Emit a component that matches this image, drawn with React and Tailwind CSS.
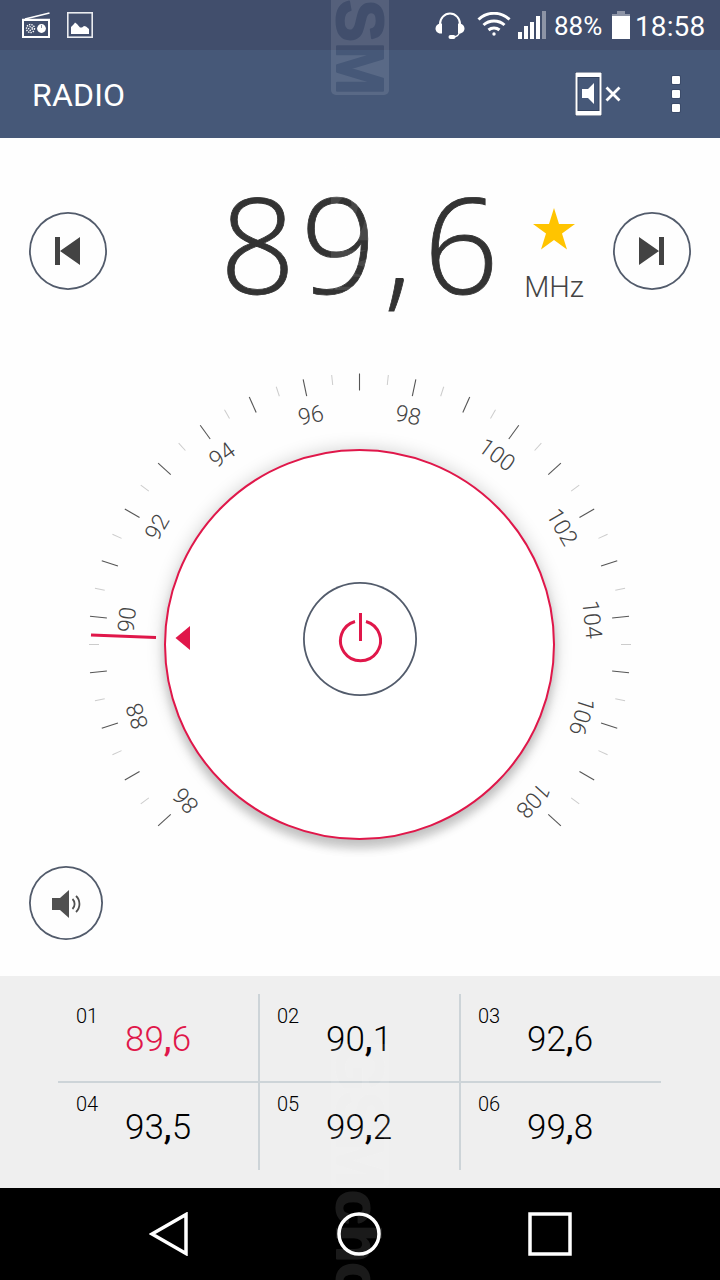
const presets = [
  { id: "01", freq: "89,6", active: true },
  { id: "02", freq: "90,1" },
  { id: "03", freq: "92,6" },
  { id: "04", freq: "93,5" },
  { id: "05", freq: "99,2" },
  { id: "06", freq: "99,8" },
];

// 86 - 108 MHz, 12 degrees per MHz, 97 MHz on top
const majorTicks = Array.from({ length: 23 }, (_, i) => -132 + i * 12);
const minorTicks = Array.from({ length: 22 }, (_, i) => -126 + i * 12);
const labels = [86, 88, 90, 92, 94, 96, 98, 100, 102, 104, 106, 108];

function StatusBar() {
  return (
    <div className="flex h-[50px] items-center bg-[#414e6c] pl-[22px] pr-[14px] text-white">
      <svg className="mt-[2px]" width="28" height="28" viewBox="0 0 28 28" fill="none">
        <path d="M3 7L27.500 1" stroke="#fff" strokeWidth="1.600" />
        <rect x="1" y="8" width="26" height="17" stroke="#fff" strokeWidth="2" />
        <path d="M0 7.500h28" stroke="#fff" strokeWidth="1.500" />
        <circle cx="8.500" cy="16.500" r="4" stroke="#fff" strokeWidth="1.400" strokeDasharray="1.4 1" />
        <circle cx="8.500" cy="16.500" r="1.800" stroke="#fff" strokeWidth="1.400" strokeDasharray="1.2 1" />
        <circle cx="19.500" cy="16.500" r="4.400" fill="#fff" />
        <path d="M19.500 13v3" stroke="#8f97aa" strokeWidth="1" />
      </svg>
      <svg className="ml-[17px]" width="26" height="26" viewBox="0 0 26 26" fill="none">
        <rect x=".8" y=".8" width="24.400" height="24.400" stroke="#e9ebef" strokeWidth="1.600" />
        <path d="M4 22v-7l3-3 1-1.500 2 1.500 3 3.500h2l2-1.500 2 .5 3 2.500v5z" fill="#fff" />
      </svg>
      <svg className="ml-auto mt-[2px]" width="30" height="28" viewBox="0 0 30 28" fill="none">
        <path d="M5 14V12a10 10.500 0 0 1 20 0v2" stroke="#fff" strokeWidth="2" />
        <path d="M7 11.500v10H5.500C2.500 21.500.5 19 .5 16.500s2-4.500 4-5zM23 11.500v10h1.500c3 0 5-2.500 5-5s-2-4.500-4-5z" fill="#fff" />
        <path d="M24.500 20c-.5 3-3 5-7 5" stroke="#fff" strokeWidth="1.500" />
        <rect x="13.500" y="23" width="7" height="4" rx="2" fill="#fff" />
      </svg>
      <svg className="ml-[12px] mt-[-2px]" width="34" height="24" viewBox="0 0 34 24" fill="none" stroke="#fff">
        <path d="M1.500 7.500a22.500 22.500 0 0 1 31 0" strokeWidth="3" />
        <path d="M6.500 13a15.500 15.500 0 0 1 21 0" strokeWidth="3" />
        <path d="M11.500 18a8.500 8.500 0 0 1 11 0" strokeWidth="3" />
        <circle cx="17" cy="22" r="1.700" fill="#fff" stroke="none" />
      </svg>
      <svg className="ml-[7px]" width="28" height="28" viewBox="0 0 28 28" fill="#fff">
        <rect x="0" y="21" width="4" height="7" />
        <rect x="6" y="15" width="4" height="13" />
        <rect x="12" y="11" width="4" height="17" />
        <rect x="18" y="5" width="4" height="23" />
        <rect x="24" y="0" width="4" height="28" opacity=".4" />
      </svg>
      <span className="ml-[8px] mt-[2px] w-[50px] text-[26px] leading-[50px]">88%</span>
      <svg className="ml-[8px]" width="18" height="28" viewBox="0 0 18 28">
        <path d="M5 0h8v3h5v2H0V3h5z" fill="#8d94a6" />
        <rect y="5" width="18" height="23" fill="#fff" />
      </svg>
      <span className="ml-[5px] mt-[3px] w-[71px] text-[28px] leading-[50px] tracking-[0.1px]">18:58</span>
    </div>
  );
}

function AppBar() {
  return (
    <div className="flex h-[88px] items-center bg-[#465878] pl-[32px] pr-[40px] text-white">
      <h1 className="mt-px text-[32px] tracking-[0.2px]">RADIO</h1>
      <svg className="ml-auto" width="48" height="44" viewBox="0 0 48 44">
        <rect x="0" y="0" width="27" height="44" fill="#34435f" />
        <rect x=".5" y=".5" width="26" height="43" rx="1" fill="#fff" />
        <rect x="2.500" y="5" width="22" height="34" fill="#34435f" />
        <rect x="3.500" y="6" width="20" height="32" fill="#465878" />
        <path d="M7 17h6l6-6v21l-6-6H7z" fill="#fff" />
        <path d="M31.500 15.500l13 13M44.500 15.500l-13 13" stroke="#fff" strokeWidth="2.800" />
      </svg>
      <div className="ml-[49px] flex flex-col gap-[6px]">
        <span className="h-2 w-2 rounded-[1px] bg-white ring-1 ring-[#34435f]/60" />
        <span className="h-2 w-2 rounded-[1px] bg-white ring-1 ring-[#34435f]/60" />
        <span className="h-2 w-2 rounded-[1px] bg-white ring-1 ring-[#34435f]/60" />
      </div>
    </div>
  );
}

function RoundButton({ className, children }) {
  return (
    <button className={`flex shrink-0 items-center justify-center rounded-full shadow-[inset_0_0_0_1.8px_#525b6b] ${className}`}>
      {children}
    </button>
  );
}

function Frequency() {
  return (
    <div className="flex h-[226px] items-center px-[29px]">
      <RoundButton className="h-[78px] w-[78px]">
        <svg width="26" height="28" viewBox="0 0 26 28" fill="#434343">
          <path d="M0 0h5v28H0zM5 14L25 0v28z" />
        </svg>
      </RoundButton>
      <div className="ml-[113px] h-[226px] w-[289px] whitespace-nowrap font-['Open_Sans'] text-[132px] font-light leading-[210px] tracking-[5.500px] text-[#333] [-webkit-text-stroke:0.8px_#333]">
        89<span className="ml-[2px] mr-[6px]">,</span>6
      </div>
      <div className="ml-[13px] flex w-[64px] flex-col items-center pt-[14px]">
        <svg width="42" height="42" viewBox="0 0 42 42" fill="#ffc400">
          <path d="M21 0l5 16h16L29 25.500l5 16L21 32 8 41.500l5-16L0 16h16z" />
        </svg>
        <span className="mt-[16px] text-[29px] font-light leading-[42px] text-[#444]">MHz</span>
      </div>
      <RoundButton className="ml-auto h-[78px] w-[78px]">
        <svg width="26" height="28" viewBox="0 0 26 28" fill="#434343">
          <path d="M20 0h5v28h-5zM20 14L0 0v28z" />
        </svg>
      </RoundButton>
    </div>
  );
}

function Dial() {
  return (
    <div className="grid h-[496px] place-items-center">
      <svg className="col-start-1 row-start-1" width="720" height="496" viewBox="0 364 720 496">
        {majorTicks.map((a) => (
          <path key={a} d="M359.500 373.500v17" stroke="#555" strokeWidth="1.100" transform={`rotate(${a} 359.500 644.500)`} />
        ))}
        {minorTicks.map((a) => (
          <path key={a} d="M360 373.500v10" stroke="#ccc" strokeWidth="1" transform={`rotate(${a} 360 644.500)`} />
        ))}
        {labels.map((n) => (
          <text
            key={n}
            x="359.500"
            y="418"
            textAnchor="middle"
            fill="#444"
            className="text-[23px] font-light"
            transform={`rotate(${(n - 97) * 12} 359.500 644)`}
          >
            {n}
          </text>
        ))}
        <path d="M91 635l65 2.500" stroke="#e0174a" strokeWidth="3" />
      </svg>
      <div className="z-10 col-start-1 row-start-1 mr-px mt-[64px] flex h-[391px] w-[391px] items-center rounded-full border-2 border-[#e0174a] bg-white shadow-[0_0_18px_rgba(0,0,0,0.180),0_9px_8px_rgba(0,0,0,0.160)]">
        <svg className="ml-[9px] mt-[-13px]" width="15" height="24" viewBox="0 0 15 24" fill="#e0174a">
          <path d="M.5 12L15 0v24z" />
        </svg>
        <RoundButton className="ml-[113px] mt-[-11px] h-[114px] w-[114px]">
          <svg className="mb-[2px]" width="44" height="50" viewBox="0 0 44 50" fill="none" stroke="#e0174a" strokeWidth="3">
            <path d="M22.500 0v28" />
            <path d="M17 8.500a20 20 0 1 0 11 0" />
          </svg>
        </RoundButton>
      </div>
    </div>
  );
}

function Presets() {
  return (
    <div className="h-[212px] bg-[#efefef] pl-[58px] pr-[59px] pt-[18px]">
      <div className="grid grid-cols-[202px_201px_200px] grid-rows-[89px_87px]">
        {presets.map((p, i) => (
          <button
            key={p.id}
            className={`flex items-start border-[#cdd4d8] text-left ${i < 3 ? "border-b-2 pt-[10px]" : "pt-[9px]"} ${i % 3 < 2 ? "border-r-2" : ""} ${i % 3 > 0 ? "pl-[17px]" : "pl-[18px]"}`}
          >
            <span className="w-[49px] text-[20px] font-light leading-[24px] text-black">{p.id}</span>
            <span className={`mt-[15px] whitespace-nowrap text-[35px] font-light leading-[42px] ${p.active ? "text-[#e0174a]" : "text-black"}`}>
              {p.freq.split(",")[0]}
              <span className="font-medium">,</span>
              {p.freq.split(",")[1]}
            </span>
          </button>
        ))}
      </div>
    </div>
  );
}

function NavBar() {
  return (
    <div className="flex h-[92px] items-center bg-black pl-[149px]">
      <svg width="40" height="44" viewBox="0 0 40 44" fill="none" stroke="#fff" strokeWidth="3.500">
        <path d="M3 22L37 2.500v39z" />
      </svg>
      <svg className="ml-[148px]" width="44" height="44" viewBox="0 0 44 44" fill="none" stroke="#fff" strokeWidth="3.500">
        <circle cx="22" cy="22" r="20" />
      </svg>
      <svg className="ml-[147px]" width="44" height="44" viewBox="0 0 44 44" fill="none" stroke="#fff" strokeWidth="3.500">
        <rect x="2" y="2" width="40" height="40" />
      </svg>
    </div>
  );
}

function Watermark() {
  return (
    <svg className="pointer-events-none absolute left-0 top-0 z-20" width="720" height="1280" viewBox="0 0 720 1280" fontFamily="Liberation Sans" fontWeight="700">
      <mask id="gsm" maskUnits="userSpaceOnUse" x="331" y="-48" width="58" height="143">
        <rect x="331" y="-48" width="58" height="143" rx="5" fill="#fff" />
        <text transform="translate(337 -50) rotate(90)" fontSize="67" textLength="145" lengthAdjust="spacingAndGlyphs" fill="#000" stroke="#000" strokeWidth="2" strokeLinejoin="round">GSM</text>
      </mask>
      {[0, 195, 1092].map((y) => (
        <g key={y} transform={`translate(0 ${y})`}>
          <rect x="331" y="-48" width="58" height="143" fill="#fff" opacity=".1" mask="url(#gsm)" />
        </g>
      ))}
      <g opacity=".1">
        <text transform="translate(337 1190) rotate(90)" fontSize="62" fill="#fff" stroke="#fff" strokeWidth="2" strokeLinejoin="round">cho</text>
      </g>
    </svg>
  );
}

export default function App() {
  return (
    <div className="relative h-[1280px] w-[720px] overflow-hidden bg-[#fefefe] font-['Roboto']">
      <StatusBar />
      <AppBar />
      <Frequency />
      <Dial />
      <div className="flex h-[116px] items-start pl-[29px] pt-[6px]">
        <RoundButton className="h-[74px] w-[74px]">
          <svg className="mt-px" width="29" height="28" viewBox="0 0 29 28">
            <path d="M0 8h8l9-8v28l-9-8H0z" fill="#505050" />
            <path d="M20.500 9a7 7 0 0 1 0 10M24 6a11 11 0 0 1 0 16" fill="none" stroke="#505050" strokeWidth="1.800" />
          </svg>
        </RoundButton>
      </div>
      <Presets />
      <NavBar />
      <Watermark />
    </div>
  );
}
